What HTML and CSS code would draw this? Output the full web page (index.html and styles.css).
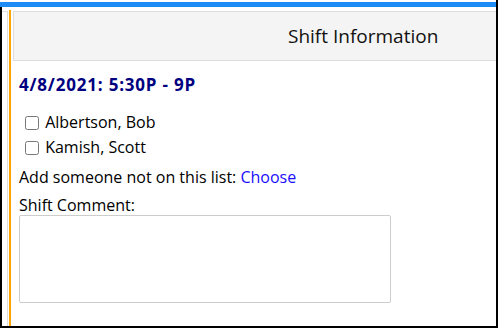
FILE: index.html
```html
<!DOCTYPE html>
<html lang="en">
<head>
  <meta charset="UTF-8">
  <title>Shift Information</title>
  <link rel="stylesheet" href="styles.css">
</head>
<body>

<div class="frame">
  <div class="topbar"></div>
  <div class="workspace">
    <div class="side-panel"></div>
    <div class="accent"></div>

    <!-- Shift dialog -->
    <div class="shift">
      <div class="shift-header">Shift Information</div>
      <div class="shift-body">
        <div class="shift-date">4/8/2021: 5:30P - 9P</div>
        <ul class="people">
          <li><label><input type="checkbox"> Albertson, Bob</label></li>
          <li><label><input type="checkbox"> Kamish, Scott</label></li>
        </ul>
        <div class="add-person">Add someone not on this list: <a href="#">Choose</a></div>
        <label class="comment-label" for="comment">Shift Comment:</label>
        <textarea id="comment" class="comment"></textarea>
      </div>
    </div>
  </div>
</div>

</body>
</html>
```

FILE: styles.css
```css
html, body {
  margin: 0;
  padding: 0;
  background: #fff;
}

.frame {
  height: 328px;
  box-sizing: border-box;
  padding-top: 2px;
  border-right: 2px solid #000;
  border-bottom: 2px solid #000;
  display: flex;
  flex-direction: column;
  font-family: "Open Sans", Arial, sans-serif;
  color: #000;
}

.topbar {
  height: 5px;
  background-color: #1e8cf6;
}

.workspace {
  flex: 1;
  display: flex;
  border-left: 2px solid #000;
  min-height: 0;
}

.side-panel {
  width: 5px;
  margin-top: 4px;
  border-top: 1px solid #ddd;
  border-right: 1px solid #ddd;
}

.accent {
  width: 2px;
  margin-top: 3px;
  margin-left: 1px;
  background-color: #ffa500;
}

.shift {
  flex: 1;
  margin-left: 2px;
  margin-top: 4px;
  overflow: hidden;
}

.shift-header {
  height: 48px;
  line-height: 48px;
  background-color: #f4f4f4;
  border-top: 1px solid #ddd;
  border-bottom: 1px solid #ddd;
  border-left: 1px solid #ddd;
  padding-left: 274px;
  font-size: 19px;
  color: #111;
}

.shift-body {
  padding: 12px 6px 0 6px;
}

.shift-date {
  font-size: 17px;
  font-weight: bold;
  letter-spacing: 0.8px;
  color: #000080;
  margin-bottom: 15px;
}

.people {
  list-style: none;
  margin: 0;
  padding: 0 0 0 2px;
}

.people li {
  font-size: 16px;
  height: 25px;
}

.people input {
  margin: 0 2px 0 4px;
  width: 14px;
  height: 14px;
  vertical-align: -2px;
}

.add-person {
  font-size: 16px;
  margin-top: 5px;
}

.add-person a {
  color: #1a0dff;
  text-decoration: none;
}

.comment-label {
  display: block;
  font-size: 16px;
  margin-top: 6px;
}

.comment {
  display: block;
  width: 372px;
  height: 88px;
  margin-top: -1px;
  box-sizing: border-box;
  border: 1px solid #ccc;
  border-radius: 2px;
  resize: none;
}
```
